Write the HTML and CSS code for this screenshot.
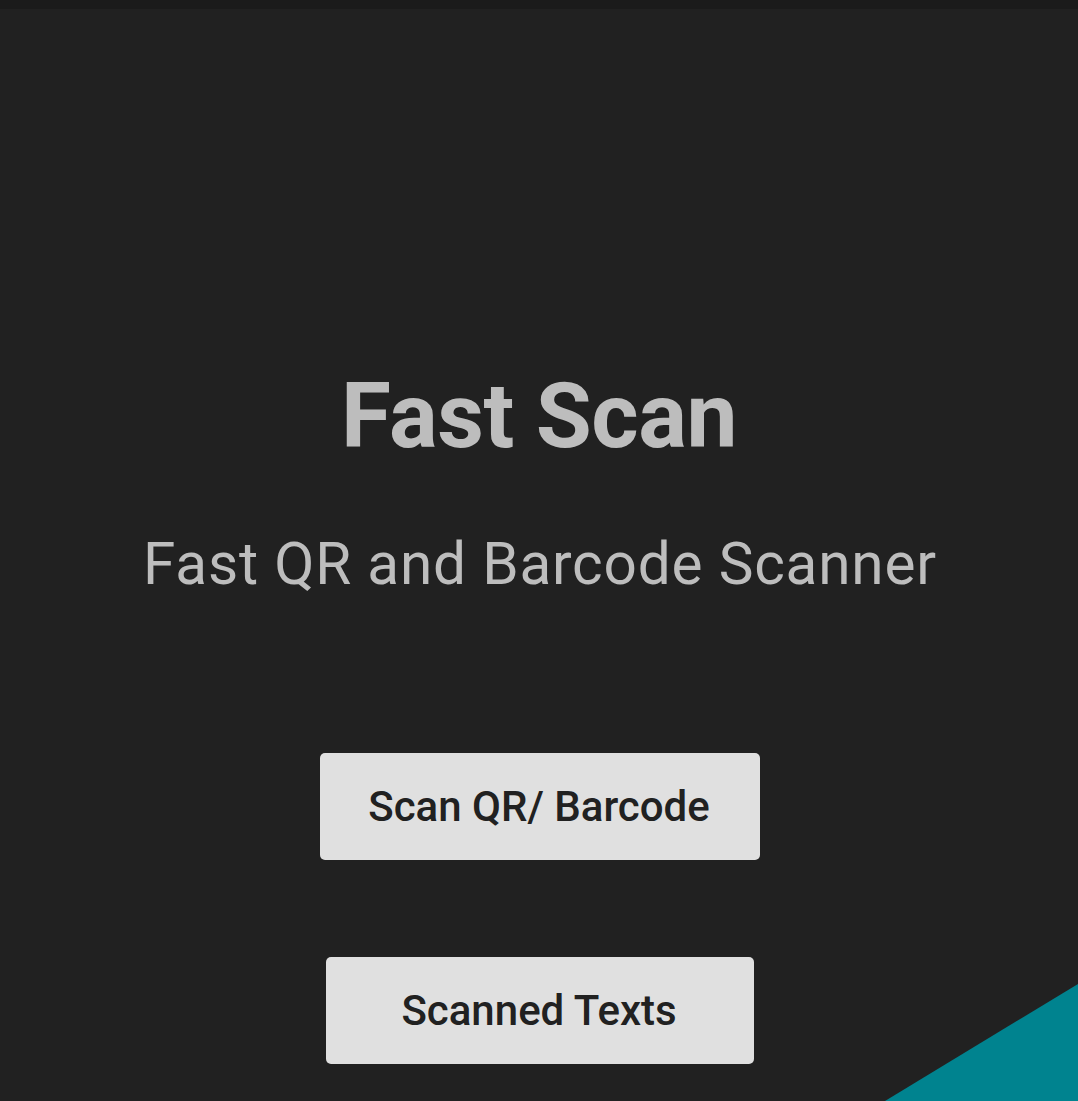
FILE: index.html
```html
<!DOCTYPE html>
<html lang="en">
<head>
<meta charset="utf-8">
<title>Fast Scan</title>
<link rel="stylesheet" href="styles.css">
</head>
<body>
<div class="statusbar"></div>
<main class="screen">
  <h1 class="title">Fast Scan</h1>
  <p class="subtitle">Fast QR and Barcode Scanner</p>
  <button class="btn btn-scan">Scan QR/ Barcode</button>
  <button class="btn btn-texts">Scanned Texts</button>
  <svg class="corner" width="193" height="117" viewBox="0 0 193 117" aria-hidden="true">
    <polygon points="0,117 193,0 193,117" fill="#00838f"/>
  </svg>
</main>
</body>
</html>
```
FILE: styles.css
```css
html, body {
  margin: 0;
  padding: 0;
  height: 100%;
  background: #212121;
  overflow: hidden;
}
body {
  font-family: Roboto, "Noto Sans", sans-serif;
}
.statusbar {
  height: 9px;
  background: #1b1b1b;
}
.screen {
  position: relative;
  height: 1092px;
  padding-left: 2px;
  box-sizing: border-box;
  display: flex;
  flex-direction: column;
  align-items: center;
}
.title {
  margin: 362px 0 0;
  padding-right: 2px;
  font-size: 91px;
  line-height: 1;
  font-weight: 700;
  letter-spacing: -0.5px;
  color: #bdbdbd;
}
.subtitle {
  margin: 73px 0 0;
  font-size: 58.5px;
  line-height: 1;
  font-weight: 400;
  letter-spacing: 0.8px;
  color: #bdbdbd;
}
.btn {
  height: 107px;
  border: none;
  border-radius: 5px;
  background: #e0e0e0;
  color: #212121;
  font-family: Roboto, "Noto Sans", sans-serif;
  font-size: 42px;
  font-weight: 500;
  padding: 0 2px 0 0;
  box-sizing: border-box;
  display: flex;
  align-items: center;
  justify-content: center;
}
.btn-scan {
  width: 440px;
  margin-top: 159px;
}
.btn-texts {
  width: 428px;
  margin-top: 97px;
}
.corner {
  position: absolute;
  right: 0;
  bottom: 0;
  display: block;
}
```
